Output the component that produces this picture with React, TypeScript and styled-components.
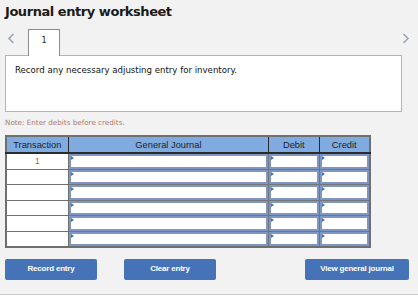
import React from "react";
import styled, { createGlobalStyle } from "styled-components";

const GlobalStyle = createGlobalStyle`
  html, body {
    margin: 0;
    padding: 0;
    background: #ffffff;
  }
`;

const Page = styled.div`
  width: 418px;
  height: 295px;
  background: #f2f2f2;
  border-bottom: 1px solid #c8c8c8;
  padding: 4px 5px 0 5px;
  box-sizing: border-box;
  font-family: "DejaVu Sans", Verdana, sans-serif;
`;

const Title = styled.h1`
  margin: 0;
  font-size: 13px;
  font-weight: 700;
  letter-spacing: -0.45px;
  color: #1a1a1a;
  line-height: 16px;
`;

const TabBar = styled.div`
  display: flex;
  align-items: flex-start;
  height: 27px;
  margin-top: 9px;
`;

const Chevron = styled.svg<{ $right?: boolean }>`
  width: 8px;
  height: 11px;
  margin-top: 4px;
  margin-left: ${(p) => (p.$right ? "auto" : "2px")};
  margin-right: ${(p) => (p.$right ? "3px" : "13px")};
`;

const Tab = styled.div`
  width: 32px;
  height: 27px;
  box-sizing: border-box;
  border: 1px solid #8c8c8c;
  border-bottom: none;
  background: #ffffff;
  font-size: 8px;
  text-align: center;
  line-height: 21px;
  color: #222;
  position: relative;
  z-index: 1;
`;

const Prompt = styled.div`
  width: 397px;
  height: 57px;
  box-sizing: border-box;
  margin-top: -1px;
  border: 1px solid #b4b4b4;
  background: #ffffff;
  padding: 9px 9px;
  font-size: 8.6px;
  color: #111;
`;

const Note = styled.div`
  font-size: 7.2px;
  color: #a97a6e;
  margin-top: 6px;
  height: 10px;
`;

const Table = styled.table`
  margin-top: 7px;
  border-collapse: collapse;
  width: 366px;
  font-family: "Liberation Sans", Arial, sans-serif;
  border: 2px solid #6f6f6f;
`;

const Head = styled.th<{ $w: number }>`
  width: ${(p) => p.$w}px;
  height: 15px;
  background: #80abe0;
  border: 1px solid #2b2b2b;
  border-bottom: 2px solid #2b2b2b;
  font-weight: 400;
  font-size: 9.3px;
  color: #222;
  padding: 0;
`;

const Cell = styled.td`
  height: 14.5px;
  padding: 0;
  border: 1px solid #707070;
  background: #ffffff;
  text-align: center;
  font-size: 8.5px;
  color: #c0542c;
  vertical-align: middle;
  line-height: 10px;
`;

const EntryCell = styled.td`
  height: 14.5px;
  padding: 0;
  border: 1px solid #757575;
  background: #ffffff;
`;

const Field = styled.div`
  position: relative;
  height: 10.5px;
  border: 2px solid #7d96c3;
  background: #ffffff;
  &::before {
    content: "";
    position: absolute;
    left: 0;
    top: 0;
    border-left: 3px solid #3c72c8;
    border-top: 2px solid transparent;
    border-bottom: 2px solid transparent;
  }
`;

const Actions = styled.div`
  display: flex;
  margin-top: 11px;
  width: 404px;
`;

const Button = styled.button<{ $w: number; $gap?: number }>`
  width: ${(p) => p.$w}px;
  height: 21px;
  margin-left: ${(p) => p.$gap ?? 0}px;
  background: #4672b7;
  border: none;
  border-radius: 2px;
  color: #ffffff;
  font-family: "Liberation Sans", Arial, sans-serif;
  font-weight: 700;
  font-size: 8px;
  letter-spacing: -0.2px;
  padding: 0 0 2px 0;
`;

const rows = ["1", "", "", "", "", ""];

const ChevronIcon = ({ right }: { right?: boolean }) => (
  <Chevron $right={right} viewBox="0 0 8 11">
    <path
      d={right ? "M1.5 1 L6 5.5 L1.5 10" : "M6.5 1 L2 5.5 L6.5 10"}
      fill="none"
      stroke="#9ba5b1"
      strokeWidth="1.6"
    />
  </Chevron>
);

export default function App() {
  return (
    <>
      <GlobalStyle />
      <Page>
        <Title>Journal entry worksheet</Title>
        <TabBar>
          <ChevronIcon />
          <Tab>1</Tab>
          <ChevronIcon right />
        </TabBar>
        <Prompt>Record any necessary adjusting entry for inventory.</Prompt>
        <Note>Note: Enter debits before credits.</Note>
        <Table>
          <thead>
            <tr>
              <Head $w={61}>Transaction</Head>
              <Head $w={203}>General Journal</Head>
              <Head $w={50}>Debit</Head>
              <Head $w={50}>Credit</Head>
            </tr>
          </thead>
          <tbody>
            {rows.map((n, i) => (
              <tr key={i}>
                <Cell>{n}</Cell>
                <EntryCell>
                  <Field />
                </EntryCell>
                <EntryCell>
                  <Field />
                </EntryCell>
                <EntryCell>
                  <Field />
                </EntryCell>
              </tr>
            ))}
          </tbody>
        </Table>
        <Actions>
          <Button $w={92}>Record entry</Button>
          <Button $w={92} $gap={27}>Clear entry</Button>
          <Button $w={104} $gap={89}>View general journal</Button>
        </Actions>
      </Page>
    </>
  );
}
